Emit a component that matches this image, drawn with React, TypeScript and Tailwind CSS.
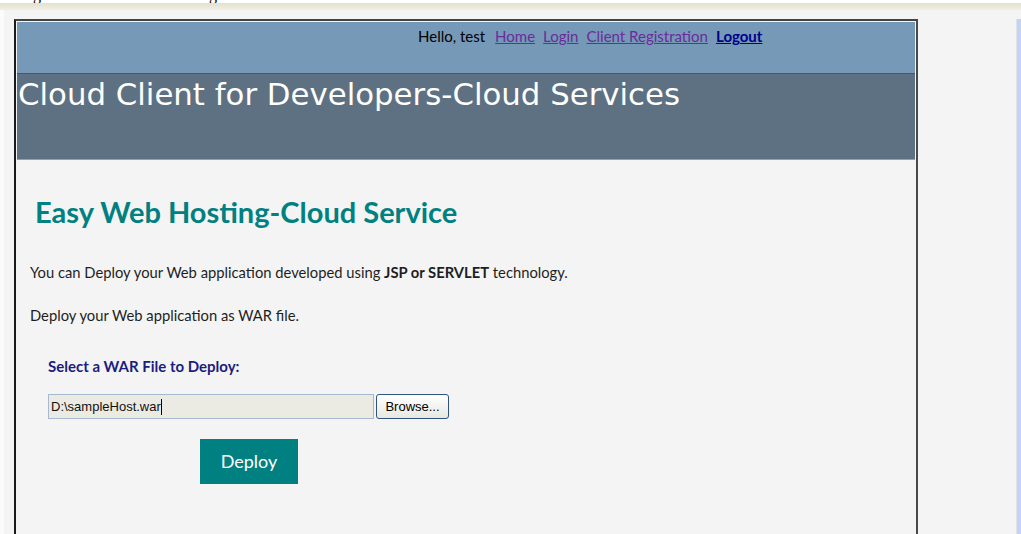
import React from 'react'

const nav = [
  { label: 'Home', cls: 'text-[#6a2c9c] font-normal' },
  { label: 'Login', cls: 'text-[#6a2c9c] font-normal' },
  { label: 'Client Registration', cls: 'text-[#6a2c9c] font-normal' },
  { label: 'Logout', cls: 'text-[#00008b] font-bold' },
]

function Header() {
  return (
    <div className="flex flex-col">
      <div className="h-[51px] bg-[#7599b7] pl-[401px] pt-[3px] flex items-start gap-[8px] text-[15px] text-black">
        <span className="mr-[2px]">Hello, test</span>
        {nav.map((n) => (
          <a key={n.label} href="#" className={`underline ${n.cls}`}>
            {n.label}
          </a>
        ))}
      </div>
      <div className="h-[1px] bg-[#3f5b71]" />
      <div className="h-[85px] bg-[#5e7182] pl-[1px] pt-[3px] font-['DejaVu_Sans',sans-serif] text-[30.8px] text-white leading-[34px]">
        Cloud Client for Developers-Cloud Services
      </div>
      <div className="h-[1px] bg-[#8ea3b6]" />
    </div>
  )
}

function DeployForm() {
  return (
    <div className="flex flex-col pl-[13px]">
      <div className="pl-[5px] pt-[34px] text-[#008080] font-bold text-[29px] leading-[36px]">
        Easy Web Hosting-Cloud Service
      </div>
      <p className="mt-[32px] text-[14.75px] text-[#1e1e1e] leading-[20px]">
        You can Deploy your Web application developed using <b>JSP or SERVLET</b> technology.
      </p>
      <p className="mt-[23px] text-[14.75px] text-[#1e1e1e] leading-[20px]">Deploy your Web application as WAR file.</p>
      <div className="pl-[18px] mt-[31px] text-[15px] font-bold text-[#1c1c80] leading-[20px]">Select a WAR File to Deploy:</div>
      <div className="pl-[18px] mt-[18px] flex items-center gap-[2px] font-['Liberation_Sans',Arial,sans-serif] text-[13px]">
        <div className="w-[326px] h-[25px] bg-[#ebeae3] border border-[#a7b9cf] flex items-center pl-[2px] text-[#111]">
          D:\sampleHost.war<span className="w-[1px] h-[16px] bg-black" />
        </div>
        <button className="w-[73px] h-[25px] rounded-[3px] border border-[#2f5480] bg-gradient-to-b from-white to-[#e8e8e2] text-black">
          Browse...
        </button>
      </div>
      <div className="pl-[170px] mt-[20px]">
        <button className="w-[98px] h-[45px] bg-[#008080] text-white text-[18px]">Deploy</button>
      </div>
    </div>
  )
}

export default function App() {
  return (
    <div className="w-[1021px] h-[534px] overflow-hidden bg-white flex flex-col font-['Lato','Open_Sans',sans-serif]">
      {/* bottom of the previous line, clipped by the window */}
      <div className="h-[3px] overflow-hidden relative font-['Liberation_Serif',serif] text-[16px] leading-[16px]">
        <span className="absolute left-[33px] top-[-13px]">g</span>
        <span className="absolute left-[209px] top-[-13px]">g</span>
      </div>
      <div className="h-[7px] bg-gradient-to-b from-[#e4e0cc] to-[#f1efe4]" />
      <div className="flex-1 flex">
        <div className="w-[4px] bg-[#fbfbfb]" />
        <div className="flex-1 flex bg-[#f4f4f4] pt-[9px]">
          <div className="ml-[10px] w-[904px] border-l-2 border-t-2 border-r-2 border-l-[#1a1a1a] border-t-[#444] border-r-[#4a4a4a] p-[1px] flex flex-col">
            <Header />
            <DeployForm />
          </div>
          <div className="flex-1" />
          <div className="w-[1px] bg-[#e2e2e2]" />
          <div className="w-[4px] bg-[#c1d4f7]" />
        </div>
      </div>
    </div>
  )
}
